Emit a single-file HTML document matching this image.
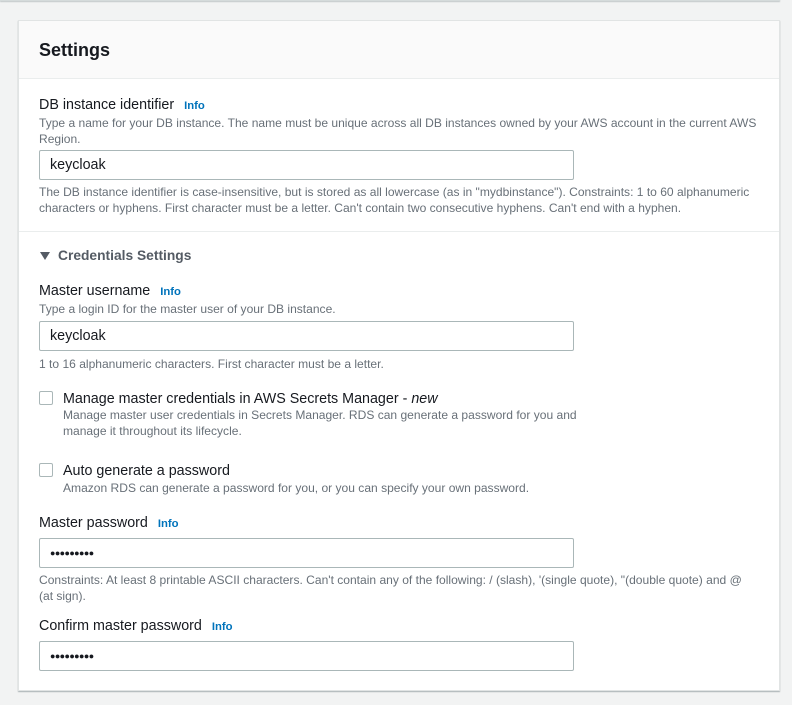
<!DOCTYPE html>
<html><head><meta charset="utf-8"><style>
*{margin:0;padding:0;box-sizing:border-box}
body{width:792px;height:705px;background:#f2f3f3;font-family:"Liberation Sans",sans-serif;position:relative;overflow:hidden;color:#16191f}
.a{position:absolute;white-space:nowrap}
.top{position:absolute;left:0;top:-10px;width:780px;height:11px;background:#fff;border:1px solid #d5dbdb;box-shadow:0 1px 1px rgba(0,28,36,.2)}
.card{position:absolute;left:18px;top:20px;width:762px;height:671px;background:#fff;border:1px solid #e1e4e4;box-shadow:0 1px 1px rgba(0,28,36,.3)}
.hdr{position:absolute;left:0;top:0;width:100%;height:58px;background:#fafafa;border-bottom:1px solid #eaeded}
.lbl{font-size:14.3px;color:#16191f;line-height:16px}
.info{font-size:11.3px;font-weight:bold;color:#0073bb;margin-left:10px}
.d{font-size:12.05px;color:#687078;line-height:15.5px}
.inp{position:absolute;left:20px;width:535px;height:30px;border:1px solid #aab7b8;border-radius:2px;font-size:14.3px;padding:0 10px;line-height:28px;color:#16191f}
.pw{font-size:9px;letter-spacing:-0.6px}
.cb{position:absolute;left:20px;width:14px;height:14px;border:1px solid #aab7b8;border-radius:2px;background:#fff}
.div{position:absolute;left:0;width:100%;height:1px;background:#eaeded}
</style></head><body>
<div class="top"></div>
<div class="card">
<div class="hdr"></div>
<div class="a" style="left:20px;top:17px;font-size:18px;font-weight:bold;line-height:24px">Settings</div>

<div class="a lbl" style="left:20px;top:76px">DB instance identifier<span class="info">Info</span></div>
<div class="a d" style="left:20px;top:95px">Type a name for your DB instance. The name must be unique across all DB instances owned by your AWS account in the current AWS<br>Region.</div>
<div class="inp" style="top:129px">keycloak</div>
<div class="a d" style="left:20px;top:164px">The DB instance identifier is case-insensitive, but is stored as all lowercase (as in "mydbinstance"). Constraints: 1 to 60 alphanumeric<br>characters or hyphens. First character must be a letter. Can't contain two consecutive hyphens. Can't end with a hyphen.</div>
<div class="div" style="top:210px"></div>

<div class="a" style="left:21px;top:231px;width:0;height:0;border-left:5px solid transparent;border-right:5px solid transparent;border-top:8px solid #545b64"></div>
<div class="a" style="left:39px;top:227px;font-size:13.8px;font-weight:bold;color:#545b64;line-height:16px">Credentials Settings</div>

<div class="a lbl" style="left:20px;top:262px">Master username<span class="info">Info</span></div>
<div class="a d" style="left:20px;top:281px">Type a login ID for the master user of your DB instance.</div>
<div class="inp" style="top:300px">keycloak</div>
<div class="a d" style="left:20px;top:336px">1 to 16 alphanumeric characters. First character must be a letter.</div>

<div class="cb" style="top:370px"></div>
<div class="a lbl" style="left:44px;top:370px">Manage master credentials in AWS Secrets Manager - <i>new</i></div>
<div class="a d" style="left:44px;top:387px">Manage master user credentials in Secrets Manager. RDS can generate a password for you and<br>manage it throughout its lifecycle.</div>

<div class="cb" style="top:442px"></div>
<div class="a lbl" style="left:44px;top:442px">Auto generate a password</div>
<div class="a d" style="left:44px;top:460px">Amazon RDS can generate a password for you, or you can specify your own password.</div>

<div class="a lbl" style="left:20px;top:494px">Master password<span class="info">Info</span></div>
<div class="inp pw" style="top:517px">●●●●●●●●●</div>
<div class="a d" style="left:20px;top:552px">Constraints: At least 8 printable ASCII characters. Can't contain any of the following: / (slash), '(single quote), "(double quote) and @<br>(at sign).</div>

<div class="a lbl" style="left:20px;top:597px">Confirm master password<span class="info">Info</span></div>
<div class="inp pw" style="top:620px">●●●●●●●●●</div>
</div>
</body></html>
